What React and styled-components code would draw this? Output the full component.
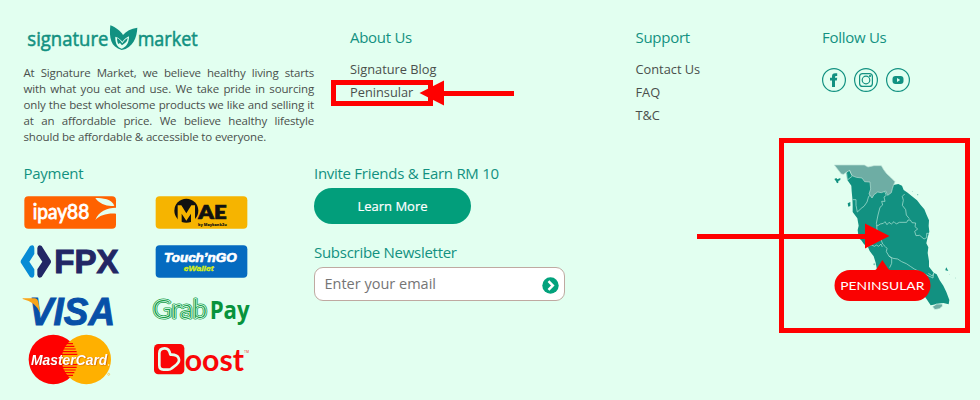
import React from "react";
import styled, { createGlobalStyle } from "styled-components";

const teal = "#129181";

const GlobalStyle = createGlobalStyle`
  * { box-sizing: border-box; }
  body { margin: 0; background: #e2fff0; }
`;

const Footer = styled.footer`
  position: relative;
  width: 980px;
  height: 400px;
  overflow: hidden;
  padding: 24px 0 0 23.5px;
  background: #e2fff0;
  color: #4a4f4c;
  font-family: "Open Sans", "Noto Sans", sans-serif;
`;

const TopRow = styled.div`
  display: grid;
  grid-template-columns: 326.5px 285.5px 186.5px 1fr;
  height: 139px;
`;

const BottomRow = styled.div`
  display: flex;
`;

const Column = styled.section`
  flex: none;
  width: ${(p) => p.$width || "auto"};
`;

const BrandLogo = styled.svg`
  display: block;
  width: 176px;
  height: 29px;
  overflow: visible;
`;

const Intro = styled.p`
  margin: 12px 0 0;
  width: 290.5px;
  font-size: 11.5px;
  letter-spacing: -0.15px;
  line-height: 16px;
  text-align: justify;
`;

const Heading = styled.h2`
  margin: 0;
  color: ${teal};
  font-size: 15px;
  font-weight: 400;
  letter-spacing: -0.28px;
  line-height: 20px;
  white-space: nowrap;
  padding: ${(p) => p.$top || "0"} 0 2px;
`;

const LinkList = styled.ul`
  list-style: none;
  margin: 6px 0 0;
  padding: 3px 0 0;
`;

const LinkItem = styled.li`
  height: 23px;
  font-size: 12.8px;
  line-height: 23px;
`;

const FooterLink = styled.a`
  color: inherit;
  text-decoration: none;
`;

const Socials = styled.div`
  display: flex;
  gap: 8px;
  margin-top: 19px;
`;

const SocialIcon = styled.svg`
  width: 24px;
  height: 24px;
  fill: none;
  stroke: ${teal};
  stroke-width: 1.2;
`;

const LogoGrid = styled.div`
  display: grid;
  grid-template-columns: 120px 120px;
  grid-auto-rows: 49px;
  column-gap: 5px;
  margin: 3px 0 0 -8.5px;
`;

const PaymentLogo = styled.svg`
  width: 120px;
  height: 49px;
  overflow: visible;
  font-family: "Open Sans", sans-serif;
`;

const LearnMore = styled.button`
  display: block;
  width: 157px;
  height: 36px;
  margin: 3px 0 18px;
  border: 0;
  border-radius: 18px;
  background: #029e7b;
  color: #fff;
  font: 500 13px/36px "Open Sans", sans-serif;
  -webkit-text-stroke: 0.2px #fff;
  padding: 0;
`;

const EmailField = styled.div`
  display: flex;
  align-items: center;
  width: 251px;
  height: 34px;
  margin-top: 3px;
  padding: 0 5px 0 9.5px;
  border: 1px solid #bfa9a1;
  border-radius: 9px;
  background: #fff;
`;

const EmailInput = styled.input`
  flex: 1;
  min-width: 0;
  padding: 0 0 2px;
  border: 0;
  outline: 0;
  background: none;
  font: 14.5px "Open Sans", sans-serif;
  &::placeholder { color: #757575; }
`;

const SubmitIcon = styled.svg`
  width: 17px;
  height: 17px;
  margin-top: 2px;
`;

const Map = styled.svg`
  flex: none;
  width: 140px;
  height: 160px;
  margin: -8px 0 0 255px;
`;

const Annotations = styled.svg`
  position: absolute;
  inset: 0;
  width: 980px;
  height: 400px;
  pointer-events: none;
`;

const ShadowedText = styled.text`
  filter: drop-shadow(2px 1px 0 #9b1c0099);
`;

function Brand() {
  return (
    <BrandLogo viewBox="40 27 528 87">
      <g fill={teal} fontFamily="Open Sans, sans-serif" fontSize="60" fontWeight="400" stroke={teal} strokeWidth="1.6">
        <text x="50" y="94" textLength="243" lengthAdjust="spacingAndGlyphs">signature</text>
        <text x="381" y="94" textLength="180" lengthAdjust="spacingAndGlyphs">market</text>
      </g>
      <path fill={teal} d="M299 31C315 37 331 49 337 60C346 48 361 41 380 38C379 66 367 99 333 105C300 96 295 69 299 31Z" />
      <path fill="#e2fff0" d="M314 65C326 69 331 75 335 80C340 73 347 67 355 64C355 85 346 97 333 101C320 97 313 84 314 65Z" />
      <path fill={teal} d="M319 69C329 74 332 81 335 85C339 78 344 73 351 69C350 78 346 82 342 85L334 91L328 84L323 87C320 82 319 77 319 69Z" />
    </BrandLogo>
  );
}

function IPay() {
  return (
    <PaymentLogo viewBox="0 9 360 147">
      <rect x="28" y="34" width="275" height="97" rx="12" fill="#ff6200" />
      <text x="53" y="102" fill="#fff" fontSize="62" fontWeight="400" fontFamily="Lato" stroke="#fff" strokeWidth="2.5" textLength="170" lengthAdjust="spacingAndGlyphs">ipay88</text>
      <path fill="#e2fff0" d="M241 39C263 39 291 42 298 62C278 65 254 58 241 39ZM303 68V86C277 84 253 91 241 105C251 79 275 69 303 68Z" />
    </PaymentLogo>
  );
}

function Mae() {
  return (
    <PaymentLogo viewBox="0 9 360 147">
      <rect x="47" y="34" width="275" height="97" rx="12" fill="#f6b400" />
      <circle cx="139" cy="77" r="36" fill="#111" />
      <path fill="#f6b400" d="M113 115V61H124L139 85L154 61H165V115H153V86L139 107L125 86V115Z" />
      <text x="175" y="103" fontFamily="Lato" fontSize="56" fontWeight="800" fill="#111" stroke="#111" strokeWidth="2" textLength="85" lengthAdjust="spacingAndGlyphs">AE</text>
      <text x="174" y="122" fontSize="11" fontWeight="800" fill="#111" textLength="86" lengthAdjust="spacingAndGlyphs">by Maybank2u</text>
    </PaymentLogo>
  );
}

function Fpx() {
  return (
    <PaymentLogo viewBox="0 156 360 147">
      <path fill="#078bd5" d="M45 183Q57 176 58 190V207L43 230L58 253V270Q56 283 45 276L18 234Q16 230 18 226Z" />
      <path fill="#222765" d="M67 189Q69 177 80 183L107 226Q109 230 107 234L80 276Q69 283 67 270V253L82 230L67 207Z" />
      <text x="118" y="263" fontFamily="Liberation Sans" fontSize="98" fontWeight="700" fill="#222765" stroke="#222765" strokeWidth="3" textLength="193" lengthAdjust="spacingAndGlyphs">FPX</text>
    </PaymentLogo>
  );
}

function TouchNGo() {
  return (
    <PaymentLogo viewBox="0 156 360 147">
      <rect x="47" y="181" width="275" height="97" rx="12" fill="#056bc0" />
      <g fontStyle="italic" fontWeight="700" fontFamily="Liberation Sans">
        <text x="72" y="232" fill="#fff" stroke="#fff" strokeWidth="2" fontSize="36" textLength="218" lengthAdjust="spacingAndGlyphs">Touch’nGO</text>
        <text x="131" y="257" fill="#d4ed18" stroke="#d4ed18" strokeWidth="1" fontSize="22" textLength="90" lengthAdjust="spacingAndGlyphs">eWallet</text>
      </g>
    </PaymentLogo>
  );
}

function Visa() {
  return (
    <PaymentLogo viewBox="0 3 360 147">
      <text x="42" y="121" fill="#0750a8" fontFamily="Liberation Sans" stroke="#0750a8" strokeWidth="3" fontSize="115" fontWeight="700" fontStyle="italic" textLength="258" lengthAdjust="spacingAndGlyphs">VISA</text>
      <path fill="#f9a51a" d="M23 40H58Q68 41 70 51L76 85Q62 50 23 42Z" />
    </PaymentLogo>
  );
}

function MasterCard() {
  return (
    <PaymentLogo viewBox="0 150 360 147">
      <circle cx="115" cy="223.5" r="74" fill="#f00" />
      <circle cx="214" cy="223.5" r="74" fill="#ffb000" />
      <path stroke="#f00" strokeWidth="3.5" d="M155 176H174M150 184H178M146 192H182M143 200H185M141 208H187M141 239H187M143 247H185M146 255H182M150 263H178M155 271H174" />
      <ShadowedText x="48" y="240" fontFamily="Liberation Sans" fontSize="43" fontWeight="700" fontStyle="italic" fill="#fff" textLength="229" lengthAdjust="spacingAndGlyphs">MasterCard</ShadowedText>
      <circle cx="281" cy="240" r="2" fill="#fff" />
      <circle cx="281" cy="268" r="3" fill="none" stroke="#ffb000" strokeWidth="1.5" />
    </PaymentLogo>
  );
}

const GrabWord = styled.text.attrs({
  x: 38,
  y: 98,
  textLength: 163,
  lengthAdjust: "spacingAndGlyphs",
})`
  font: 300 74px Lato, sans-serif;
  fill: ${(p) => p.$fill || "none"};
  stroke: ${(p) => p.$stroke || "none"};
  stroke-width: ${(p) => p.$width || 0};
  stroke-linejoin: round;
`;

function GrabPay() {
  return (
    <PaymentLogo viewBox="0 3 360 147">
      <GrabWord $stroke="#159c48" $width={9}>Grab</GrabWord>
      <GrabWord $stroke="#e2fff0" $width={4.5} aria-hidden="true">Grab</GrabWord>
      <GrabWord $fill="#159c48" aria-hidden="true">Grab</GrabWord>
      <text x="209" y="101" fontSize="75" fontWeight="700" fill="#07933c" textLength="120" lengthAdjust="spacingAndGlyphs">Pay</text>
    </PaymentLogo>
  );
}

function Boost() {
  return (
    <PaymentLogo viewBox="0 150 360 147">
      <rect x="42" y="177" width="91" height="91" rx="13" fill="#fa0606" />
      <path fill="none" stroke="#e2fff0" strokeWidth="8" strokeLinejoin="round" d="M58 205Q58 190 74 190Q88 190 91 209Q112 208 116 220Q120 230 109 239L95 250Q91 254 84 254H70Q58 254 58 241Z" />
      <text x="134" y="259" fontFamily="Lato" fontSize="94" fontWeight="700" fill="#fa0606" textLength="178" lengthAdjust="spacingAndGlyphs">oost</text>
      <text x="313" y="205" fontSize="9" fill="#fa0606" textLength="14">TM</text>
    </PaymentLogo>
  );
}

function PeninsularMap() {
  return (
    <Map viewBox="0 0 420 480">
      <path fill={teal} d="M79 54L87 45L95 61L150 70L220 90L235 87L246 92L251 105L263 113L276 124L291 136L302 150L313 163L320 180L327 196L326 213L328 230L323 247L319 265L325 277L323 294L327 318L327 335L341 353L350 358L359 376L370 392L379 411L388 435L386 448L370 444L353 447L332 451L320 433L304 410L190 350L171 344L167 323L161 304L149 288L144 276L132 268L125 257L116 249L113 225L116 212L112 190L103 178L98 171L98 150L97 130L95 109L94 92L82 75Z" />
      <path fill="#6eada4" stroke="#bce1d7" strokeWidth="2" d="M43 30H133L144 36L162 32H184L191 44L200 56L213 68L225 80L220 92L217 101L214 113L203 121L197 108L184 113L173 111L162 119L156 129L147 117L152 102L150 81L134 80L126 69L109 67L96 62L89 46L79 52L71 58L64 57L57 48Z" />
      <g fill="none" stroke="#a4ddcf" strokeWidth="2.3" strokeLinejoin="round">
        <path d="M80 55L82 75L96 64M98 134H108V151L112 171L126 158L132 154L141 141L146 124L151 121" />
        <path d="M194 110L199 121L192 126L195 139L185 139L188 150L180 157L174 180L169 205L172 213L181 207L190 205L195 200L201 209L207 202L214 207L222 200L229 207L238 202L260 202L264 195H271L276 203L287 204L285 215L293 222L284 229L288 242L299 241L312 252L320 248V235L327 235" />
        <path d="M254 117L247 124L250 136L247 151L257 164L259 180L268 191M170 210L171 228L182 251L188 267L196 275L201 280L199 290L207 303L215 310V325L209 338M144 274L154 270L164 274L169 270L176 274L183 267L187 276M206 303L219 310L233 312L245 320L259 326L271 334L283 342L298 350L339 369L341 354M341 354L337 363L325 355" />
      </g>
      <path fill={teal} d="M43 72L49 69L52 73L61 69V75L55 78V83L51 85L48 79ZM83 145L91 141V153L85 155ZM377 341L379 337L382 343L385 348L376 346Z" />
      <path fill="#6eada4" stroke="#e2fff0" strokeWidth="2" d="M337 455L350 447H367L368 453L359 461L345 464Z" />
      <g fill="#78c5b3"><circle cx="277" cy="110" r="1.3" /><circle cx="293" cy="119" r="2" /><circle cx="389" cy="358" r="1" /><circle cx="407" cy="369" r="1.2" /><circle cx="163" cy="328" r="3" /></g>
      <path fill="#fa0202" d="M187 315L205 342Q207 345 212 345H285A46.5 46.5 0 0 1 285 438H90A46.5 46.5 0 0 1 90 345H164Q168 345 170 341Z" />
      <text x="61" y="405" fill="#fff" fontFamily="Lato" fontSize="36" textLength="252" lengthAdjust="spacingAndGlyphs">PENINSULAR</text>
    </Map>
  );
}

export default function App() {
  return (
    <>
      <GlobalStyle />
      <Footer>
        <TopRow>
          <Column>
            <Brand />
            <Intro>
              At Signature Market, we believe healthy living starts with what you eat and use. We take pride in sourcing only the best wholesome products we like and selling it at an affordable price. We believe healthy lifestyle should be affordable &amp; accessible to everyone.
            </Intro>
          </Column>
          <Column>
            <Heading $top="3px">About Us</Heading>
            <LinkList>
              <LinkItem><FooterLink href="#blog">Signature Blog</FooterLink></LinkItem>
              <LinkItem><FooterLink href="#peninsular">Peninsular</FooterLink></LinkItem>
            </LinkList>
          </Column>
          <Column>
            <Heading $top="3px">Support</Heading>
            <LinkList>
              <LinkItem><FooterLink href="#contact">Contact Us</FooterLink></LinkItem>
              <LinkItem><FooterLink href="#faq">FAQ</FooterLink></LinkItem>
              <LinkItem><FooterLink href="#terms">T&amp;C</FooterLink></LinkItem>
            </LinkList>
          </Column>
          <Column>
            <Heading $top="3px">Follow Us</Heading>
            <Socials>
              <SocialIcon viewBox="0 0 24 24">
                <circle cx="12" cy="12" r="11.4" />
                <path fill={teal} stroke="none" d="M10 19V12.5H8V9.8H10V8.5Q10 5.2 13 5.2H15.2V7.9H14Q13 7.9 13 9V9.8H15.2L14.8 12.5H13V19Z" />
              </SocialIcon>
              <SocialIcon viewBox="0 0 24 24">
                <circle cx="12" cy="12" r="11.4" />
                <rect x="5.6" y="5.6" width="12.8" height="12.8" rx="3" />
                <circle cx="12" cy="12" r="3.8" />
                <circle cx="16" cy="8" r=".5" />
              </SocialIcon>
              <SocialIcon viewBox="0 0 24 24">
                <circle cx="12" cy="12" r="11.4" />
                <rect x="6.5" y="8" width="11" height="8" rx="3" fill={teal} stroke="none" />
                <path d="M11 10L14.2 12L11 14Z" fill="#e2fff0" stroke="none" />
              </SocialIcon>
            </Socials>
          </Column>
        </TopRow>
        <BottomRow>
          <Column $width="290.5px">
            <Heading>Payment</Heading>
            <LogoGrid>
              <IPay /><Mae />
              <Fpx /><TouchNGo />
              <Visa /><GrabPay />
              <MasterCard /><Boost />
            </LogoGrid>
          </Column>
          <Column $width="251px">
            <Heading>Invite Friends &amp; Earn RM 10</Heading>
            <LearnMore>Learn More</LearnMore>
            <Heading>Subscribe Newsletter</Heading>
            <EmailField>
              <EmailInput placeholder="Enter your email" aria-label="Email" />
              <SubmitIcon viewBox="0 0 17 17">
                <circle cx="8.5" cy="8.5" r="8.2" fill="#02a27c" />
                <path d="M6.5 4.2L10.8 8.5L6.5 12.8" fill="none" stroke="#fff" strokeWidth="2.5" />
              </SubmitIcon>
            </EmailField>
          </Column>
          <PeninsularMap />
        </BottomRow>
        <Annotations viewBox="0 0 980 400">
          <g fill="none" stroke="#f00" strokeWidth="5">
            <rect x="333.5" y="82.5" width="97" height="21" />
            <rect x="781.5" y="140.5" width="186" height="190" />
            <path d="M444 93.5H514M697 236.5H866" />
          </g>
          <path fill="#f00" d="M419.5 93L444 80.5V105.5ZM889.5 236L865 223.5V248.5Z" />
        </Annotations>
      </Footer>
    </>
  );
}
